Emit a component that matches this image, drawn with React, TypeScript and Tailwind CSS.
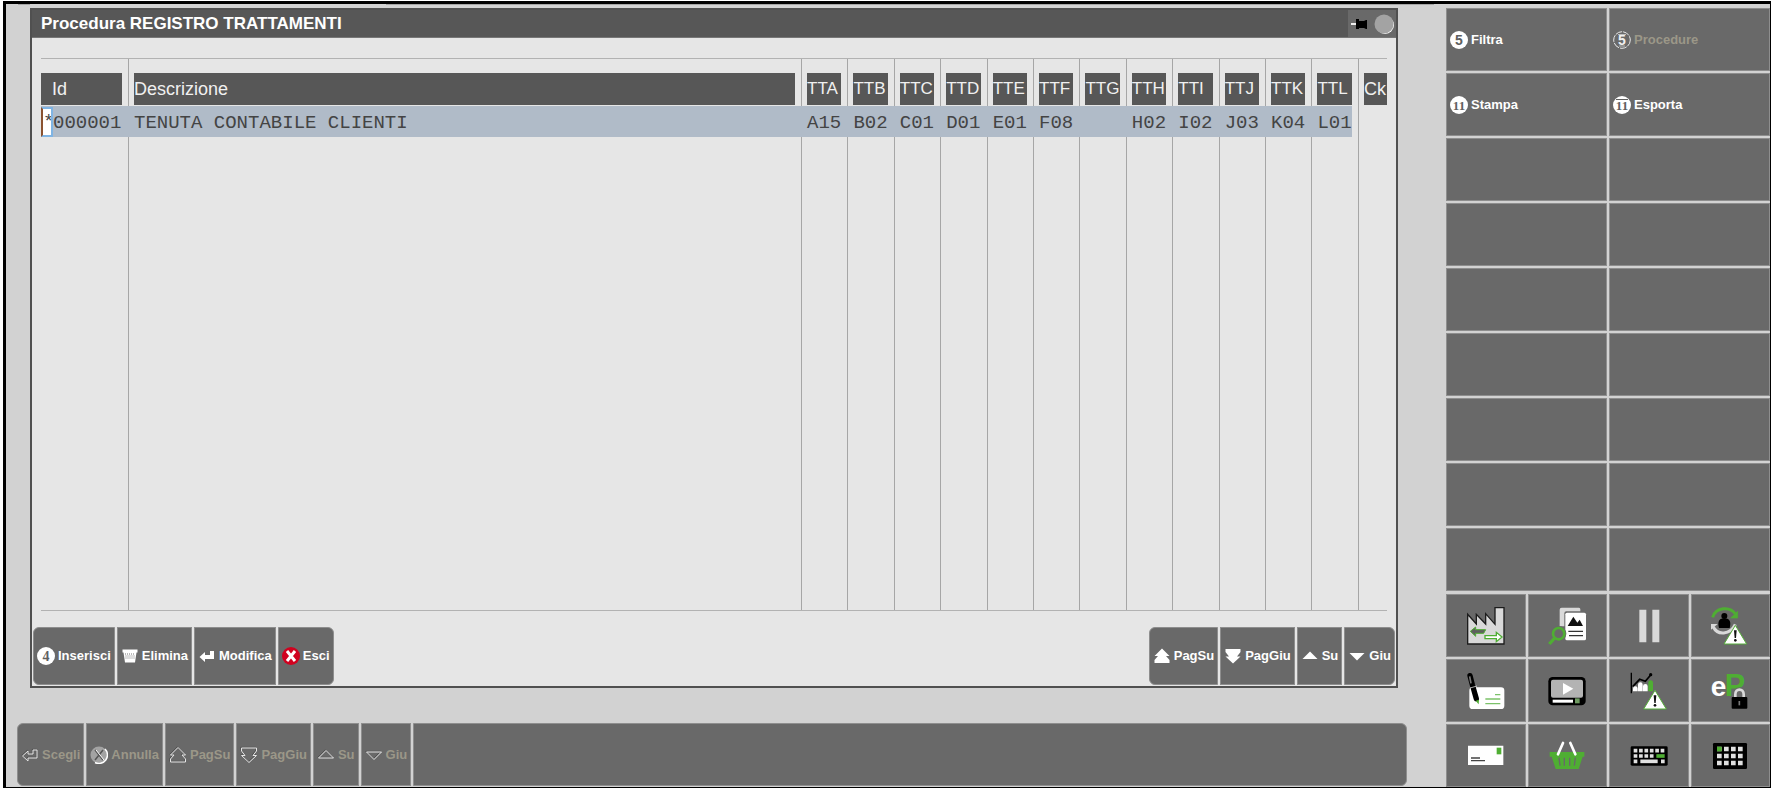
import type { ReactNode } from 'react';
import clsx from 'clsx';

const CODES = [
  { head: 'TTA', value: 'A15' },
  { head: 'TTB', value: 'B02' },
  { head: 'TTC', value: 'C01' },
  { head: 'TTD', value: 'D01' },
  { head: 'TTE', value: 'E01' },
  { head: 'TTF', value: 'F08' },
  { head: 'TTG', value: '' },
  { head: 'TTH', value: 'H02' },
  { head: 'TTI', value: 'I02' },
  { head: 'TTJ', value: 'J03' },
  { head: 'TTK', value: 'K04' },
  { head: 'TTL', value: 'L01' },
];

/* ---------- small icons (18x18) ---------- */

interface NumberIconProps {
  n: string;
  variant?: 'solid' | 'shift' | 'disabled';
}

function NumberIcon({ n, variant = 'solid' }: NumberIconProps) {
  const off = variant === 'disabled';
  const serif = n !== '5';
  return (
    <svg viewBox="0 0 18 18" className="size-[18px] shrink-0" aria-hidden="true">
      <circle
        cx="9"
        cy="9"
        r={off ? 8.3 : 9}
        fill={off ? 'none' : '#fff'}
        stroke={off ? '#e8e8e8' : 'none'}
        strokeDasharray={off ? '7 1' : undefined}
      />
      <text
        x="9"
        y="13.5"
        textAnchor="middle"
        fontSize={n === '11' ? 13 : 14}
        fontWeight="700"
        fontFamily={serif ? '"Liberation Serif", serif' : '"Liberation Sans", sans-serif'}
        fill={off ? '#f0f0f0' : '#5f5f5f'}
      >
        {n}
      </text>
      {off && <path d="M5 3.5h8M6 15h6" stroke="#bdbdbd" />}
      {variant === 'shift' && <path d="M3 3.5h12" stroke="#5f5f5f" />}
    </svg>
  );
}

type GlyphName = 'trash' | 'enter' | 'exit' | 'pageUp' | 'pageDown' | 'up' | 'down';

const GLYPH_PATHS: Partial<Record<GlyphName, string>> = {
  enter: 'M1.5 10 7 5v3h5V4h4v8H7v3z',
  pageUp: 'M9 1.5 16.5 9H13l3.500 4v3h-15v-3L5 9H1.500z',
  pageDown: 'M9 16.500 1.500 9.500H5L1.500 5V2h15v3L13 9.500h3.500z',
  up: 'M9 4.500 16.500 12h-15z',
  down: 'M9 13.500 1.500 6h15z',
};

function Glyph({ name, off = false }: { name: GlyphName; off?: boolean }) {
  return (
    <svg viewBox="0 0 18 18" className="size-[18px] shrink-0" aria-hidden="true">
      {name === 'exit' && (
        <>
          <circle cx="9" cy="9" r={off ? 8.5 : 9} fill={off ? '#a3a3a3' : '#d0021f'} />
          {off && <path d="M15 3A8.500 8.500 0 0 1 5 16.500" fill="none" stroke="#fff" strokeWidth="1.500" />}
          <path
            d="m5 4 8 10M13 4 5 14"
            stroke={off ? '#555' : '#fff'}
            strokeWidth={off ? 1.5 : 3}
          />
          {off && <path d="m6 4 8 10" stroke="#fff" />}
        </>
      )}
      {name === 'trash' && (
        <>
          <path d="M1.500 2.500h15v3h-1L14 15.500H4L2.500 5.500h-1z" fill="#fff" />
          <path d="M4 7h10M4.500 9h9M4.500 11h9" stroke="#777" strokeDasharray="1 1" />
        </>
      )}
      {GLYPH_PATHS[name] && (
        <>
          {off && <path d={GLYPH_PATHS[name]} fill="none" stroke="#4f4f4f" transform="translate(-.7 -.7)" />}
          <path
            d={GLYPH_PATHS[name]}
            fill={off ? 'none' : '#fff'}
            stroke={off ? '#e6e6e6' : 'none'}
          />
        </>
      )}
    </svg>
  );
}

/* ---------- large tool icons ---------- */

function ToolSvg({ viewBox, children }: { viewBox: string; children: ReactNode }) {
  return (
    <svg viewBox={viewBox} className="size-10" aria-hidden="true">
      {children}
    </svg>
  );
}

function Warning({ x, y }: { x: number; y: number }) {
  return (
    <g transform={`translate(${x} ${y})`}>
      <path d="M0-28 34 28h-68z" fill="#fff" stroke="#55ae3a" strokeWidth="3" />
      <path d="M-4-13h8L2 10h-4z" fill="#111" />
      <circle cx="0" cy="17" r="4" fill="#111" />
    </g>
  );
}

const TOOLS: { label: string; icon: ReactNode }[] = [
  {
    label: 'Azienda',
    icon: (
      <ToolSvg viewBox="79 77 120 120">
        <path
          d="M84 191V102l26 29v-29l28 29v-31l28 32V82h27v109z"
          fill="#d9d9d9"
          stroke="#1c1c1c"
          strokeWidth="4"
        />
        <path d="M92 153l16-13v8h30l-6 11h-24v9z" fill="#5f5f5f" stroke="#4fae33" strokeWidth="3" />
        <path d="M136 166h34v-10l17 14-17 14v-9h-34z" fill="#fff" stroke="#4fae33" strokeWidth="4" />
      </ToolSvg>
    ),
  },
  {
    label: 'Ricerca documenti',
    icon: (
      <ToolSvg viewBox="322 77 120 120">
        <path d="M366 82h52q4 0 4 5v6h-42q-6 0-6 6v39h-14V88q0-6 6-6z" fill="#d9d9d9" />
        <rect x="377" y="97" width="62" height="83" rx="5" fill="#fff" />
        <path d="M384 137l17-28 12 18 7-9 10 19z" fill="#111" />
        <path d="M386 153h44M388 166h42" stroke="#333" strokeWidth="4" />
        <circle cx="357" cy="160" r="23" fill="#696969" />
        <circle cx="357" cy="160" r="17" fill="#696969" stroke="#4fae33" strokeWidth="8" />
        <path d="M345 173l-16 18" stroke="#4fae33" strokeWidth="10" />
      </ToolSvg>
    ),
  },
  {
    label: 'Pausa',
    icon: (
      <ToolSvg viewBox="85 77 120 120">
        <path d="M116 88h21v98h-21zM155 88h21v98h-21z" fill="#d9d9d9" />
      </ToolSvg>
    ),
  },
  {
    label: 'Cambio utente',
    icon: (
      <ToolSvg viewBox="330 77 120 120">
        <path d="M338 111c9-31 53-34 68-10" fill="none" stroke="#4fae33" strokeWidth="9" />
        <path d="M413 93v20h-21z" fill="#4fae33" stroke="#4fae33" strokeWidth="2" />
        <path d="M340 140c12 25 50 25 66-8" fill="none" stroke="#d9d9d9" strokeWidth="9" />
        <path d="M333 131h20l-20 17z" fill="#d9d9d9" />
        <circle cx="373" cy="107" r="9" fill="#000" />
        <path d="M373 114c19 0 20 14 16 29h-32c-4-15-3-29 16-29z" fill="#000" />
        <Warning x={406} y={163} />
      </ToolSvg>
    ),
  },
  {
    label: 'Firma',
    icon: (
      <ToolSvg viewBox="79 272 120 120">
        <rect x="89" y="321" width="105" height="65" rx="10" fill="#fff" />
        <path d="M137 356h45M137 370h45M166 343h16" stroke="#7cc26a" strokeWidth="4" />
        <path d="M91 286l7 27 12 42" stroke="#000" strokeWidth="16" strokeLinecap="round" fill="none" />
        <path d="M90 288l4 21" stroke="#777" strokeWidth="5" />
        <path d="M91 323l21-6" stroke="#fff" strokeWidth="2" />
        <path d="M108 361l10-3-1 14z" fill="#4fae33" />
      </ToolSvg>
    ),
  },
  {
    label: 'Video',
    icon: (
      <ToolSvg viewBox="322 272 120 120">
        <rect x="326" y="290" width="112" height="85" rx="13" fill="#000" />
        <rect x="334" y="298" width="96" height="54" rx="6" fill="#b3b3b3" />
        <path d="M370 308l31 17-31 18z" fill="#fff" />
        <path d="M339 358h61v9h-61z" fill="#fff" />
        <path d="M406 354h14v15h-14z" fill="#6f9b62" />
      </ToolSvg>
    ),
  },
  {
    label: 'Statistiche',
    icon: (
      <ToolSvg viewBox="85 272 120 120">
        <path d="M92 277v62" stroke="#000" strokeWidth="4" />
        <path d="M96 319l21-22 17 6 16-19" fill="none" stroke="#000" strokeWidth="5" />
        <circle cx="150" cy="283" r="5" fill="#000" />
        <path
          d="M97 333v-8q0-7 7-7t7 7v8zM112 333v-20q0-7 7-7t7 7v20zM127 333v-15q0-7 7-7t7 7v15z"
          fill="#fff"
        />
        <path d="M143 333v-25q0-8 7-8t7 8v25z" fill="#4fae33" />
        <Warning x={163} y={358} />
      </ToolSvg>
    ),
  },
  {
    label: 'eP bloccato',
    icon: (
      <ToolSvg viewBox="330 272 120 120">
        <text x="332" y="348" fontSize="84" fontWeight="700" fontFamily='"Liberation Sans", sans-serif' fill="#fff">
          e
        </text>
        <text x="374" y="348" fontSize="92" fontWeight="700" fontFamily='"Liberation Sans", sans-serif' fill="#4fae33">
          P
        </text>
        <path d="M406 352v-10c0-19 25-19 25 0v10" fill="none" stroke="#696969" strokeWidth="14" />
        <path d="M406 352v-10c0-19 25-19 25 0v10" fill="none" stroke="#d9d9d9" strokeWidth="8" />
        <rect x="395" y="350" width="47" height="35" rx="3" fill="#000" />
        <path d="M418 362v13" stroke="#777" strokeWidth="5" />
      </ToolSvg>
    ),
  },
  {
    label: 'Posta',
    icon: (
      <ToolSvg viewBox="79 467 120 120">
        <path d="M85 496h106v58H85z" fill="#fff" />
        <path d="M171 502h14v20h-14z" fill="#4fae33" />
        <path d="M94 533h27M94 541h42" stroke="#444" strokeWidth="4" />
      </ToolSvg>
    ),
  },
  {
    label: 'Acquisti',
    icon: (
      <ToolSvg viewBox="322 467 120 120">
        <path d="M330 515h104v14h-5l-12 37h-69l-12-37h-6z" fill="#4fae33" />
        <path d="M358 532l3 24M374 532v24M390 532v24M407 532l-3 24" stroke="#696969" strokeWidth="4" />
        <path d="M370 488l-15 34M392 488l15 34" stroke="#fff" strokeWidth="8" strokeLinecap="round" />
      </ToolSvg>
    ),
  },
  {
    label: 'Tastiera',
    icon: (
      <ToolSvg viewBox="85 467 120 120">
        <rect x="90" y="498" width="111" height="58" rx="4" fill="#000" />
        <path
          d="M99 511h96M99 527h64M99 543h12M181 543h12"
          stroke="#e0e0e0"
          strokeWidth="11"
          strokeDasharray="11 5.2"
        />
        <path d="M119 543h52" stroke="#e0e0e0" strokeWidth="11" />
        <path d="M167 527h25" stroke="#4fae33" strokeWidth="11" />
      </ToolSvg>
    ),
  },
  {
    label: 'Tastierino',
    icon: (
      <ToolSvg viewBox="330 467 120 120">
        <rect x="339" y="488" width="102" height="78" rx="4" fill="#000" />
        <path
          d="M351 506h77M351 527h77M351 548h77"
          stroke="#e0e0e0"
          strokeWidth="14"
          strokeDasharray="14 7"
        />
        <path d="M351 499h14v14h-14z" fill="#4fae33" />
      </ToolSvg>
    ),
  },
];

/* ---------- buttons ---------- */

interface KeyButtonProps {
  icon?: ReactNode;
  label?: string;
  disabled?: boolean;
  className?: string;
}

function KeyButton({ icon, label, disabled, className }: KeyButtonProps) {
  return (
    <button
      type="button"
      disabled={disabled}
      aria-label={label ?? 'Tasto libero'}
      className={clsx(
        'flex items-center gap-[3px] border border-[#8e8e8e] bg-[#696969] px-[3px]',
        'text-[13px] leading-4 font-bold whitespace-nowrap',
        disabled ? 'text-[#9b9788]' : 'text-white',
        className
      )}
    >
      {icon}
      {label}
    </button>
  );
}

function HeadLabel({ children, className }: { children: ReactNode; className?: string }) {
  return (
    <div className={clsx('h-8 bg-[#575757] leading-8 whitespace-nowrap text-[#f0f0f0]', className)}>
      {children}
    </div>
  );
}

function ProcedureTable() {
  return (
    <table className="w-full table-fixed border-separate border-spacing-0 border-y border-[#b2b2b2] text-left">
      <colgroup>
        <col className="w-[87px]" />
        <col className="w-1/2" />
        {CODES.map((c) => (
          <col key={c.head} />
        ))}
        <col className="w-[29px]" />
      </colgroup>
      <thead className="text-lg">
        <tr>
          <th className="pt-[14px] pr-[6px] pb-px pl-0 font-normal">
            <HeadLabel className="pl-[11px]">Id</HeadLabel>
          </th>
          <th className="border-l border-[#a6a6a6] pt-[14px] pr-[6px] pb-px pl-[5px] font-normal">
            <HeadLabel>Descrizione</HeadLabel>
          </th>
          {CODES.map((c) => (
            <th key={c.head} className="border-l border-[#a6a6a6] pt-[14px] pr-[6px] pb-px pl-[5px] font-normal">
              <HeadLabel className="text-[17px]">{c.head}</HeadLabel>
            </th>
          ))}
          <th className="border-l border-[#a6a6a6] pt-[14px] pb-px pl-[5px] font-normal">
            <HeadLabel>Ck</HeadLabel>
          </th>
        </tr>
      </thead>
      <tbody>
        <tr className="font-['Liberation_Mono',monospace] text-[19px] leading-[28px] whitespace-nowrap text-[#444]">
          <td className="h-[31px] bg-[#b0bbc8] p-0">
            <div className="flex h-[31px] items-center">
              <input
                aria-label="Selezione"
                defaultValue="*"
                className="h-[30px] w-3 border-2 border-[#7fb4e4] border-l-[#8a5230] bg-white p-0 outline-none"
              />
              <span className="pt-[3px]">000001</span>
            </div>
          </td>
          <td className="bg-[#b0bbc8] p-0 pt-[3px] pl-[6px]">TENUTA CONTABILE CLIENTI</td>
          {CODES.map((c, i) =>
            i === CODES.length - 1 ? (
              <td key={c.head} className="p-0 pr-[6px]">
                <div className="h-[31px] bg-[#b0bbc8] pt-[3px] pl-[6px]">{c.value}</div>
              </td>
            ) : (
              <td key={c.head} className="bg-[#b0bbc8] p-0 pt-[3px] pl-[6px]">
                {c.value}
              </td>
            )
          )}
          <td className="border-l border-[#a6a6a6] p-0" />
        </tr>
        {/* empty area keeps the column rules going down */}
        <tr>
          <td className="h-[473px] p-0" />
          <td className="border-l border-[#a6a6a6] p-0" />
          {CODES.map((c) => (
            <td key={c.head} className="border-l border-[#a6a6a6] p-0" />
          ))}
          <td className="border-l border-[#a6a6a6] p-0" />
        </tr>
      </tbody>
    </table>
  );
}

function ProcedureWindow() {
  return (
    <section className="mr-12 ml-6 border-2 border-[#505050] bg-[#e6e6e6]">
      <header className="flex h-7 items-center justify-between border-b border-[#777] bg-[#575757] pl-[9px]">
        <h1 className="text-[17px] leading-6 font-bold text-white">Procedura REGISTRO TRATTAMENTI</h1>
        <div className="flex h-full items-center gap-1 bg-[#696969] px-[2px]">
          <button type="button" aria-label="Blocca finestra">
            <svg viewBox="0 0 20 20" className="size-5" aria-hidden="true">
              <path d="M1 10h6" stroke="#eee" strokeWidth="2" />
              <path d="M6 5h3v2h5l2-1h1v9h-1l-2-1H9v1H6z" fill="#000" />
            </svg>
          </button>
          <button type="button" aria-label="Chiudi finestra">
            <svg viewBox="0 0 20 20" className="size-5" aria-hidden="true">
              <circle cx="11" cy="11" r="9" fill="#fff" />
              <circle cx="10" cy="10" r="9.500" fill="#a3a3a3" />
            </svg>
          </button>
        </div>
      </header>
      <div className="px-[9px] pt-5">
        <ProcedureTable />
      </div>
      <div className="mt-4 flex justify-between px-px pb-px">
        <div className="flex h-[58px] gap-[2px]">
          <KeyButton icon={<NumberIcon n="4" />} label="Inserisci" className="rounded-l-md" />
          <KeyButton icon={<Glyph name="trash" />} label="Elimina" />
          <KeyButton icon={<Glyph name="enter" />} label="Modifica" />
          <KeyButton icon={<Glyph name="exit" />} label="Esci" className="rounded-r-md" />
        </div>
        <div className="flex h-[58px] gap-[2px]">
          <KeyButton icon={<Glyph name="pageUp" />} label="PagSu" className="rounded-l-md" />
          <KeyButton icon={<Glyph name="pageDown" />} label="PagGiu" />
          <KeyButton icon={<Glyph name="up" />} label="Su" />
          <KeyButton icon={<Glyph name="down" />} label="Giu" className="rounded-r-md" />
        </div>
      </div>
    </section>
  );
}

function CommandBar() {
  return (
    <div className="mt-[35px] mr-[39px] ml-[11px] flex h-[63px] gap-[2px]">
      <KeyButton disabled icon={<Glyph name="enter" off />} label="Scegli" className="rounded-l-md" />
      <KeyButton disabled icon={<Glyph name="exit" off />} label="Annulla" />
      <KeyButton disabled icon={<Glyph name="pageUp" off />} label="PagSu" />
      <KeyButton disabled icon={<Glyph name="pageDown" off />} label="PagGiu" />
      <KeyButton disabled icon={<Glyph name="up" off />} label="Su" />
      <KeyButton disabled icon={<Glyph name="down" off />} label="Giu" />
      <div className="flex-1 rounded-r-md border border-[#8e8e8e] bg-[#696969]" />
    </div>
  );
}

function FunctionPanel() {
  return (
    <aside className="w-[324px] shrink-0 pt-1">
      <div className="grid auto-rows-[63px] grid-cols-2 gap-[2px]">
        <KeyButton icon={<NumberIcon n="5" />} label="Filtra" />
        <KeyButton disabled icon={<NumberIcon n="5" variant="disabled" />} label="Procedure" />
        <KeyButton icon={<NumberIcon n="11" />} label="Stampa" />
        <KeyButton icon={<NumberIcon n="11" variant="shift" />} label="Esporta" />
        {Array.from({ length: 14 }, (_, i) => (
          <KeyButton key={i} />
        ))}
      </div>
      <div className="mt-[3px] grid auto-rows-[63px] grid-cols-4 gap-[2px]">
        {TOOLS.map((tool) => (
          <button
            key={tool.label}
            type="button"
            aria-label={tool.label}
            className="flex items-center justify-center border border-[#8e8e8e] bg-[#696969]"
          >
            {tool.icon}
          </button>
        ))}
      </div>
    </aside>
  );
}

export default function App() {
  return (
    <div className="min-h-screen bg-white pt-px pl-[3px] font-['Liberation_Sans',Arial,sans-serif]">
      <div className="flex border-t-[3px] border-r border-b border-l-[3px] border-black bg-[#d2d2d2]">
        <main className="min-w-0 flex-1">
          <div className="mb-[3px] flex h-px pr-3 pl-3">
            <div className="w-3 bg-[#a6a6a6]" />
            <div className="ml-auto w-[74%] bg-[#a6a6a6]" />
          </div>
          <ProcedureWindow />
          <CommandBar />
        </main>
        <FunctionPanel />
      </div>
    </div>
  );
}
